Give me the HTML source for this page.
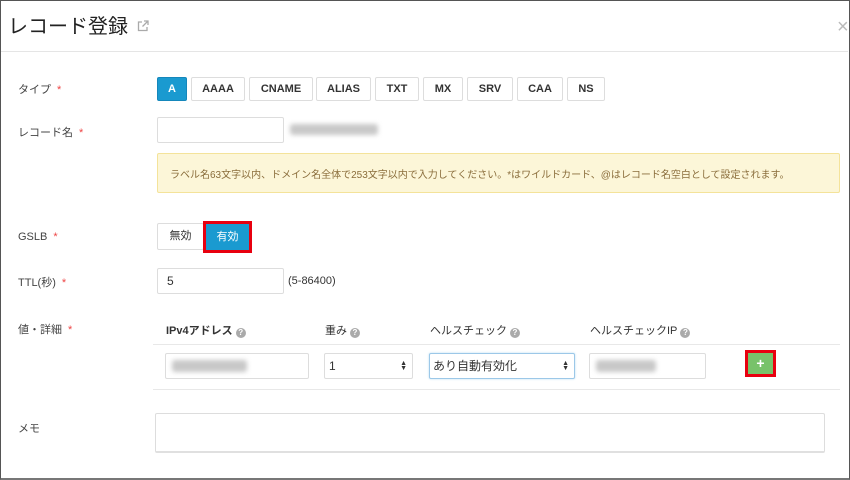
<!DOCTYPE html>
<html><head><meta charset="utf-8"><style>
*{box-sizing:border-box;margin:0;padding:0}
body{width:850px;height:480px;background:#fff;position:relative;overflow:hidden;font-family:"Liberation Sans","Noto Sans CJK JP",sans-serif;color:#333}
.a{position:absolute}
.frame{left:0;top:0;width:850px;height:480px;border:1px solid #555;border-bottom:2px solid #777}
.lbl{font-size:11px;color:#444;left:18px}
.star{color:#e44;margin-left:6px}
.btn{position:absolute;top:77px;height:24px;border:1px solid #ddd;border-radius:2px;font-size:11px;font-weight:bold;text-align:center;line-height:22px;color:#333;background:#fff}
.inp{position:absolute;border:1px solid #ddd;border-radius:2px;background:#fff;font-size:12px;padding-left:9px}
.blur{position:absolute;background:#c8c8c8;filter:blur(2.5px);border-radius:3px}
.th{position:absolute;top:322px;font-size:11px;color:#333}
.q{display:inline-block;width:10px;height:10px;border-radius:50%;background:#aaa;color:#fff;font-size:8px;line-height:10px;text-align:center;vertical-align:-1px;margin-left:3px;font-weight:bold}
.arr{position:absolute;right:5px;top:7px;font-size:7px;line-height:5px;color:#333}
</style></head><body>
<div class="a frame"></div>
<div class="a" style="left:8px;top:10px;font-size:20px;color:#222">レコード登録</div>
<svg class="a" style="left:137px;top:20px" width="12" height="12" viewBox="0 0 12 12"><path d="M5 2H1.5v8.5H10V7" fill="none" stroke="#aaa" stroke-width="1.3"/><path d="M7 1h4v4M11 1L5.5 6.5" fill="none" stroke="#aaa" stroke-width="1.3"/></svg>
<div class="a" style="left:837px;top:16px;font-size:20px;color:#bbb">×</div>
<div class="a" style="left:1px;top:51px;width:847px;height:1px;background:#e5e5e5"></div>

<div class="a lbl" style="top:81px">タイプ<span class="star">*</span></div>
<div class="btn" style="left:157px;width:30px;background:#1a9ad0;border-color:#1587bb;color:#fff">A</div>
<div class="btn" style="left:191px;width:54px">AAAA</div>
<div class="btn" style="left:249px;width:64px">CNAME</div>
<div class="btn" style="left:316px;width:55px">ALIAS</div>
<div class="btn" style="left:375px;width:44px">TXT</div>
<div class="btn" style="left:423px;width:40px">MX</div>
<div class="btn" style="left:467px;width:46px">SRV</div>
<div class="btn" style="left:517px;width:46px">CAA</div>
<div class="btn" style="left:567px;width:38px">NS</div>

<div class="a lbl" style="top:124px">レコード名<span class="star">*</span></div>
<div class="inp" style="left:157px;top:117px;width:127px;height:26px"></div>
<div class="blur" style="left:290px;top:124px;width:88px;height:11px"></div>

<div class="a" style="left:157px;top:153px;width:683px;height:40px;background:#fcf6d8;border:1px solid #f4e39a;border-radius:2px;font-size:10px;color:#8a6d3b;padding:12px 0 0 12px;white-space:nowrap">ラベル名63文字以内、ドメイン名全体で253文字以内で入力してください。*はワイルドカード、@はレコード名空白として設定されます。</div>

<div class="a lbl" style="top:231px">GSLB<span class="star">*</span></div>
<div class="btn" style="left:157px;top:223px;width:47px;height:27px;line-height:25px;font-weight:normal">無効</div>
<div class="a" style="left:203px;top:221px;width:49px;height:32px;border:3px solid #e8000f;background:#1a9ad0;color:#fff;font-size:11px;text-align:center;line-height:26px">有効</div>

<div class="a lbl" style="top:274px">TTL(秒)<span class="star">*</span></div>
<div class="inp" style="left:157px;top:268px;width:127px;height:26px;line-height:24px">5</div>
<div class="a" style="left:288px;top:275px;font-size:11px">(5-86400)</div>

<div class="a lbl" style="top:321px">値・詳細<span class="star">*</span></div>
<div class="th" style="left:166px;font-weight:bold">IPv4アドレス<span class="q">?</span></div>
<div class="th" style="left:325px">重み<span class="q">?</span></div>
<div class="th" style="left:430px">ヘルスチェック<span class="q">?</span></div>
<div class="th" style="left:590px">ヘルスチェックIP<span class="q">?</span></div>
<div class="a" style="left:153px;top:344px;width:687px;height:1px;background:#e8e8e8"></div>
<div class="inp" style="left:165px;top:353px;width:144px;height:26px"></div>
<div class="blur" style="left:172px;top:360px;width:75px;height:12px"></div>
<div class="inp" style="left:324px;top:353px;width:89px;height:26px;line-height:24px;padding-left:4px">1<span class="arr">▲<br>▼</span></div>
<div class="inp" style="left:429px;top:353px;width:146px;height:26px;line-height:24px;padding-left:3px;border-color:#9cc8e8;box-shadow:0 0 2px #b8dcf2">あり自動有効化<span class="arr">▲<br>▼</span></div>
<div class="inp" style="left:589px;top:353px;width:117px;height:26px"></div>
<div class="blur" style="left:596px;top:360px;width:60px;height:12px"></div>
<div class="a" style="left:745px;top:350px;width:31px;height:27px;border:3px solid #e8000f;background:#78c26a;color:#fff;font-weight:bold;font-size:14px;text-align:center;line-height:20px">+</div>
<div class="a" style="left:153px;top:389px;width:687px;height:1px;background:#e8e8e8"></div>

<div class="a lbl" style="top:420px">メモ</div>
<div class="inp" style="left:155px;top:413px;width:670px;height:40px;border-color:#ddd;border-bottom:2px solid #e0e0e0"></div>
</body></html>
